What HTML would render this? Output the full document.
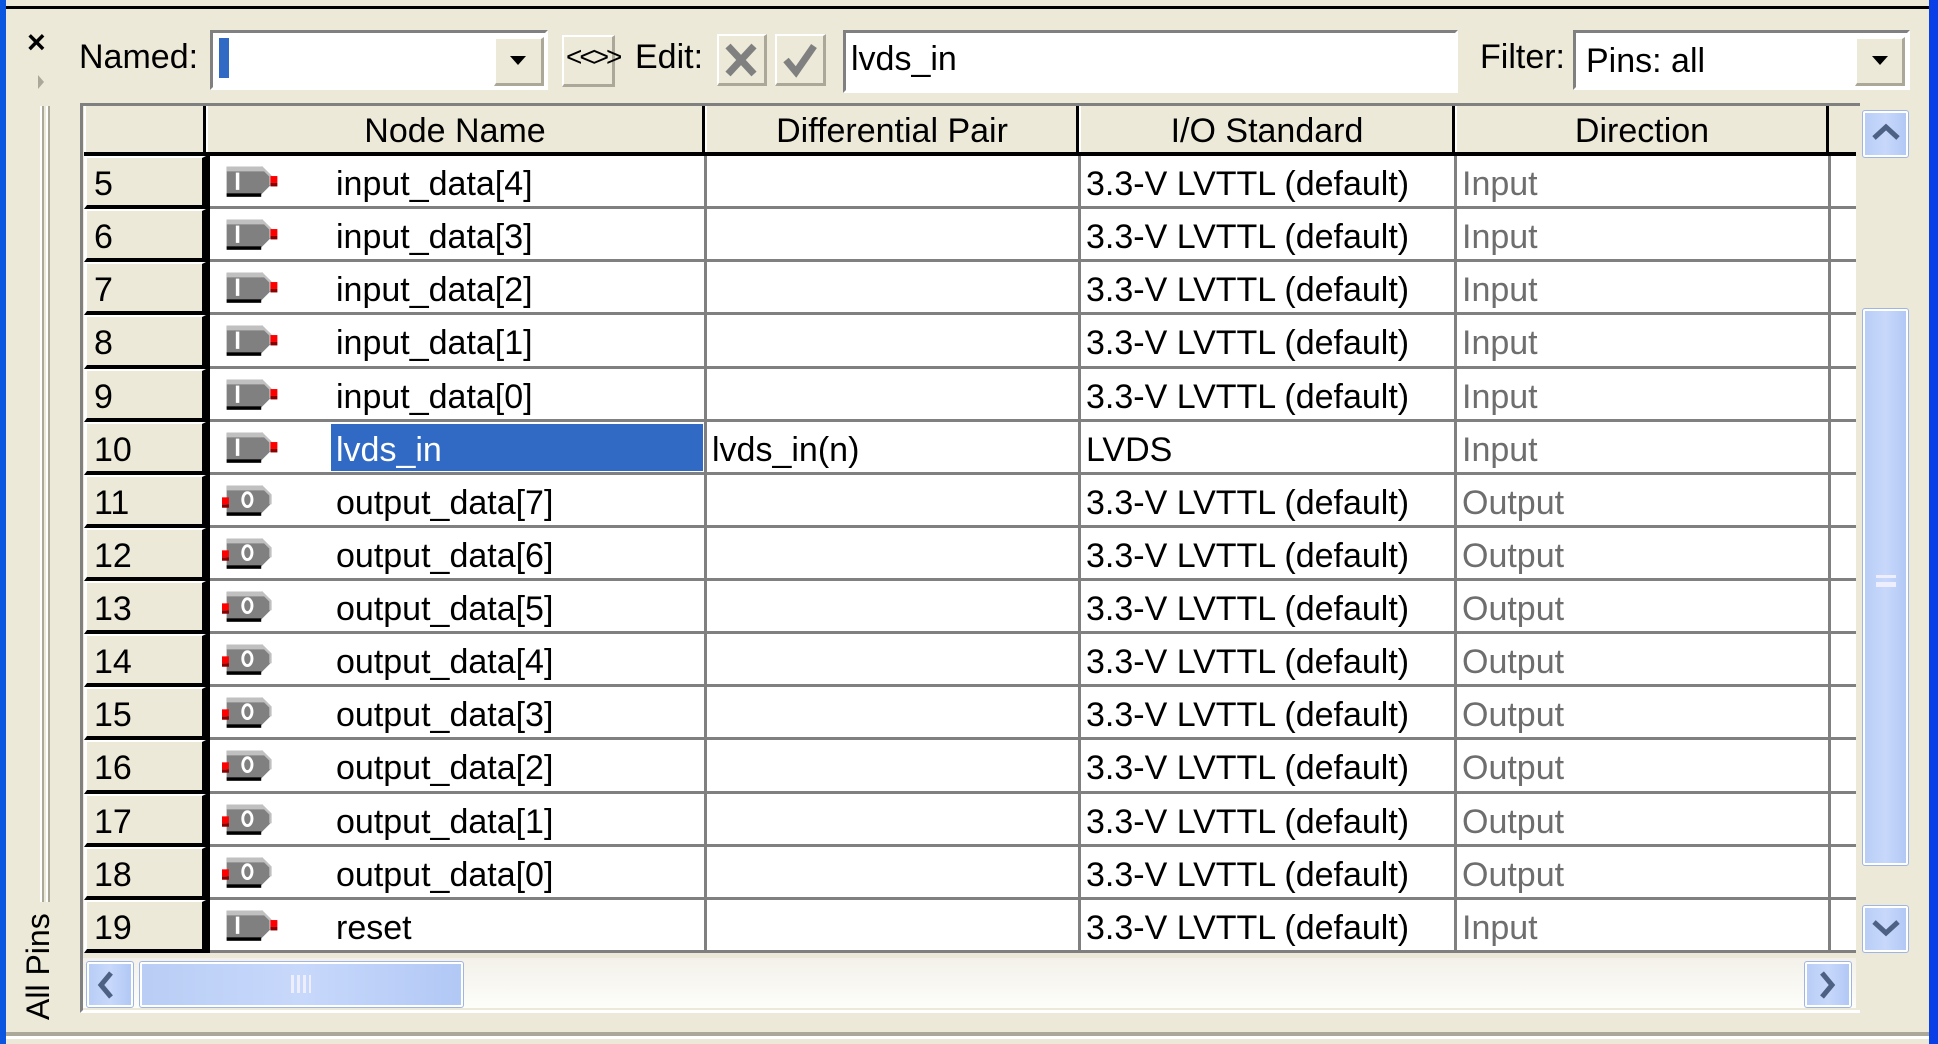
<!DOCTYPE html>
<html><head><meta charset="utf-8"><style>
*{margin:0;padding:0;box-sizing:border-box}
body{width:1938px;height:1044px;overflow:hidden;background:#ece9d8;position:relative;font-family:"Liberation Sans",sans-serif;font-size:34px;color:#000}
.a{position:absolute}
.t{position:absolute;white-space:nowrap;letter-spacing:0;line-height:1}
.sunk{border-top:3px solid #808080;border-left:3px solid #808080;border-bottom:3px solid #fff;border-right:3px solid #fff;background:#fff}
.btn{background:#ece9d8;border-top:2px solid #fff;border-left:2px solid #fff;border-right:3px solid #aca899;border-bottom:3px solid #aca899}
.xp{background:linear-gradient(90deg,#b9cdf5,#c7d8fb 50%,#b2c8f5);border:2px solid #fff;outline:1px solid #9fb5e2;border-radius:2px}
</style></head><body>
<div class="a" style="left:0;top:0;width:6px;height:1044px;background:#0a56e0"></div>
<div class="a" style="left:1929px;top:0;width:9px;height:1044px;background:#0a3fe8"></div>
<div class="a" style="left:6px;top:6px;width:1923px;height:3px;background:#000"></div>
<div class="a" style="left:6px;top:1032px;width:1923px;height:4px;background:#aca899"></div>
<div class="a" style="left:6px;top:1036px;width:1923px;height:8px;background:#fff"></div>
<div class="a" style="left:6px;top:1039px;width:1923px;height:5px;background:#ece9d8"></div>

<div class="t" style="left:27px;top:26px;font-weight:bold;font-size:32px">×</div>
<div class="a" style="left:38px;top:75px;width:0;height:0;border-left:6px solid #aca899;border-top:7px solid transparent;border-bottom:7px solid transparent"></div>
<div class="a" style="left:40px;top:106px;width:4px;height:796px;background:#fff;border-right:2px solid #aca899"></div>
<div class="a" style="left:46px;top:106px;width:4px;height:796px;background:#fff;border-right:2px solid #aca899"></div>
<div class="t" style="left:22px;top:1020px;transform:rotate(-90deg);transform-origin:0 0;font-size:32px">All Pins</div>

<div class="t" style="left:79px;top:40px">Named:</div>
<div class="a sunk" style="left:210px;top:30px;width:338px;height:60px"></div>
<div class="a" style="left:219px;top:38px;width:10px;height:40px;background:#316ac5"></div>
<div class="a btn" style="left:494px;top:37px;width:50px;height:49px"></div>
<div class="a" style="left:510px;top:56px;border-left:8px solid transparent;border-right:8px solid transparent;border-top:9px solid #000"></div>
<div class="a btn" style="left:562px;top:35px;width:53px;height:52px"></div>
<div class="t" style="left:566px;top:43px;font-size:28px;letter-spacing:-3px">&lt;&lt;&gt;&gt;</div>
<div class="t" style="left:635px;top:40px">Edit:</div>
<div class="a btn" style="left:717px;top:34px;width:50px;height:52px"></div>
<svg class="a" style="left:722px;top:40px" width="40" height="40"><path d="M6 6L32 34M32 6L6 34" stroke="#808080" stroke-width="7"/></svg>
<div class="a btn" style="left:775px;top:34px;width:51px;height:52px"></div>
<svg class="a" style="left:780px;top:40px" width="42" height="40"><path d="M6 20L16 32L34 6" stroke="#808080" stroke-width="7" fill="none"/></svg>
<div class="a sunk" style="left:843px;top:30px;width:615px;height:63px"></div>
<div class="t" style="left:851px;top:42px">lvds_in</div>
<div class="t" style="left:1480px;top:40px">Filter:</div>
<div class="a sunk" style="left:1573px;top:30px;width:337px;height:60px"></div>
<div class="t" style="left:1586px;top:44px">Pins: all</div>
<div class="a btn" style="left:1855px;top:37px;width:50px;height:49px"></div>
<div class="a" style="left:1872px;top:56px;border-left:8px solid transparent;border-right:8px solid transparent;border-top:9px solid #000"></div>

<div class="a" style="left:80px;top:103px;width:1780px;height:910px;border-top:3px solid #808080;border-left:3px solid #808080;border-bottom:3px solid #fff;background:#ece9d8"></div>
<div class="a" style="left:206px;top:156px;width:1650px;height:797px;background:#fff"></div>

<div id="g"></div>

<div class="a xp" style="left:1863px;top:111px;width:45px;height:46px"></div>
<svg class="a" style="left:1870px;top:122px" width="32" height="20"><path d="M4 16L16 5L28 16" stroke="#4d6185" stroke-width="5" fill="none"/></svg>
<div class="a xp" style="left:1863px;top:309px;width:45px;height:556px"></div>
<div class="a" style="left:1876px;top:575px;width:20px;height:12px;border-top:3px solid #eef;border-bottom:3px solid #eef;background:linear-gradient(#eef 0,#eef 0) 0 4px/100% 3px no-repeat"></div>
<div class="a xp" style="left:1863px;top:906px;width:45px;height:46px"></div>
<svg class="a" style="left:1870px;top:918px" width="32" height="20"><path d="M4 4L16 15L28 4" stroke="#4d6185" stroke-width="5" fill="none"/></svg>

<div class="a" style="left:83px;top:958px;width:1773px;height:50px;background:linear-gradient(#f3f1e9,#fdfdfa)"></div>
<div class="a xp" style="left:87px;top:962px;width:46px;height:45px"></div>
<svg class="a" style="left:95px;top:970px" width="24" height="30"><path d="M16 3L6 15L16 27" stroke="#4d6185" stroke-width="5" fill="none"/></svg>
<div class="a xp" style="left:140px;top:962px;width:323px;height:45px"></div>
<div class="a" style="left:291px;top:975px;width:20px;height:18px;background:repeating-linear-gradient(90deg,#eef 0 3px,transparent 3px 6px)"></div>
<div class="a xp" style="left:1805px;top:962px;width:46px;height:45px"></div>
<svg class="a" style="left:1815px;top:970px" width="24" height="30"><path d="M7 3L17 15L7 27" stroke="#4d6185" stroke-width="5" fill="none"/></svg>

<script>
(function(){
var rows=[["5","input_data[4]","","3.3-V LVTTL (default)","Input"],["6","input_data[3]","","3.3-V LVTTL (default)","Input"],["7","input_data[2]","","3.3-V LVTTL (default)","Input"],["8","input_data[1]","","3.3-V LVTTL (default)","Input"],["9","input_data[0]","","3.3-V LVTTL (default)","Input"],["10","lvds_in","lvds_in(n)","LVDS","Input"],["11","output_data[7]","","3.3-V LVTTL (default)","Output"],["12","output_data[6]","","3.3-V LVTTL (default)","Output"],["13","output_data[5]","","3.3-V LVTTL (default)","Output"],["14","output_data[4]","","3.3-V LVTTL (default)","Output"],["15","output_data[3]","","3.3-V LVTTL (default)","Output"],["16","output_data[2]","","3.3-V LVTTL (default)","Output"],["17","output_data[1]","","3.3-V LVTTL (default)","Output"],["18","output_data[0]","","3.3-V LVTTL (default)","Output"],["19","reset","","3.3-V LVTTL (default)","Input"]];
var h='';
h+='<div class="a" style="left:84px;top:106px;width:1772px;height:50px;background:#ece9d8;border-bottom:4px solid #000"></div>';
[[84,206],[206,705],[705,1079],[1079,1455],[1455,1829]].forEach(function(c){h+='<div class="a" style="left:'+c[0]+'px;top:106px;width:'+(c[1]-c[0])+'px;height:46px;border-left:2px solid #fff;border-right:3px solid #000"></div>';});
[["Node Name",455],["Differential Pair",892],["I/O Standard",1267],["Direction",1642]].forEach(function(c){h+='<div class="t" style="left:'+(c[1]-200)+'px;width:400px;text-align:center;top:114px">'+c[0]+'</div>';});
function icon(out){
 var s='<svg width="60" height="35" viewBox="0 0 52 30"><path d="M4 4h30l8 8v8l-8 8H4z" fill="#808080"/><path d="M4 4h30l4 4H4z" fill="#c0c0c0"/><path d="M34 4l8 8v8" stroke="#c0c0c0" stroke-width="2" fill="none"/><rect x="4" y="27" width="30" height="3" fill="#000"/>';
 if(out) s+='<rect x="0" y="14" width="6" height="6" fill="#f00"/><rect x="0" y="20" width="6" height="3" fill="#800"/><ellipse cx="22" cy="16" rx="4" ry="6" stroke="#fff" stroke-width="2.5" fill="none"/>';
 else s+='<rect x="42" y="12" width="6" height="6" fill="#f00"/><rect x="42" y="18" width="6" height="3" fill="#800"/><rect x="12" y="9" width="3" height="15" fill="#fff"/>';
 return s+'</svg>';
}
for(var i=0;i<15;i++){
 var r=rows[i],yy=156+i*53.13,ht=53.13;
 h+='<div class="a" style="left:84px;top:'+yy+'px;width:122px;height:'+ht+'px;background:#ece9d8;border-left:3px solid #fff;border-top:2px solid #fff;border-right:4px solid #000;border-bottom:4px solid #000"></div>';
 h+='<div class="a" style="left:206px;top:'+(yy+ht-3)+'px;width:1650px;height:3px;background:#808080"></div>';
 [705,1079,1455,1829].forEach(function(x){h+='<div class="a" style="left:'+(x-1)+'px;top:'+yy+'px;width:3px;height:'+ht+'px;background:#808080"></div>';});
 var ty=yy+11;
 h+='<div class="t" style="left:94px;top:'+ty+'px">'+r[0]+'</div>';
 h+='<div class="a" style="left:222px;top:'+(yy+6)+'px">'+icon(r[4]=="Output")+'</div>';
 if(r[1]=="lvds_in"){h+='<div class="a" style="left:331px;top:'+(yy+2)+'px;width:372px;height:'+(ht-6)+'px;background:#316ac5"></div><div class="t" style="left:336px;top:'+ty+'px;color:#fff">'+r[1]+'</div>';}
 else h+='<div class="t" style="left:336px;top:'+ty+'px">'+r[1]+'</div>';
 h+='<div class="t" style="left:712px;top:'+ty+'px">'+r[2]+'</div>';
 h+='<div class="t" style="left:1086px;top:'+ty+'px">'+r[3]+'</div>';
 h+='<div class="t" style="left:1462px;top:'+ty+'px;color:#6e6e6e">'+r[4]+'</div>';
}
h+='<div class="a" style="left:206px;top:156px;width:4px;height:797px;background:#000"></div>';
document.getElementById('g').innerHTML=h;
})();
</script>
</body></html>
